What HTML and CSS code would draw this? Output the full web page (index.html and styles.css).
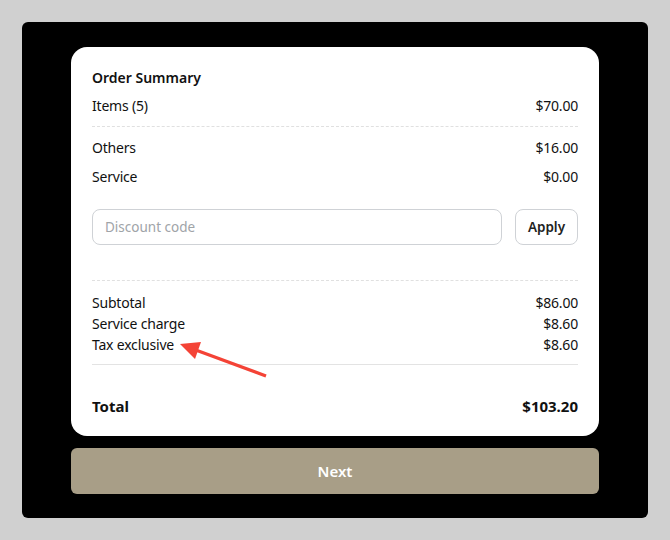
FILE: index.html
```html
<!DOCTYPE html>
<html lang="en">
<head>
    <meta charset="UTF-8">
    <meta name="viewport" content="width=device-width, initial-scale=1.0">
    <title>Order Summary</title>
    <link rel="stylesheet" href="styles.css">
</head>
<body>
    <div class="panel">
        <div class="card">
            <div class="title">Order Summary</div>
            <div class="row"><span>Items (5)</span><span>$70.00</span></div>
            <div class="dash"></div>
            <div class="row"><span>Others</span><span>$16.00</span></div>
            <div class="row"><span>Service</span><span>$0.00</span></div>
            <div class="discount">
                <input type="text" class="code" placeholder="Discount code">
                <button class="apply">Apply</button>
            </div>
            <div class="dash"></div>
            <div class="totals">
                <div class="line"><span>Subtotal</span><span>$86.00</span></div>
                <div class="line"><span>Service charge</span><span>$8.60</span></div>
                <div class="line"><span>Tax exclusive</span><span>$8.60</span></div>
            </div>
            <div class="rule"></div>
            <div class="grand"><span>Total</span><span>$103.20</span></div>
            <svg class="arrow" width="100" height="50" viewBox="0 0 100 50">
                <line x1="95" y1="41" x2="22" y2="14" stroke="#f44336" stroke-width="3.2" stroke-linecap="butt"/>
                <polygon points="9,9 30,7 24,24" fill="#f44336"/>
            </svg>
        </div>
        <button class="next">Next</button>
    </div>
</body>
</html>
```

FILE: styles.css
```css
body {
    margin: 0;
    background: #d0d0d0;
    font-family: "Noto Sans", "Open Sans", sans-serif;
    color: #111;
}

.panel {
    margin: 22px;
    height: 496px;
    box-sizing: border-box;
    background: #000;
    border-radius: 6px;
    padding: 25px 49px 0;
}

.card {
    position: relative;
    background: #fff;
    border-radius: 16px;
    padding: 21px 21px 20px;
    height: 389px;
    box-sizing: border-box;
}

.title {
    font-size: 14px;
    font-weight: 600;
    line-height: 20px;
    margin-bottom: 8px;
}

.row {
    display: flex;
    justify-content: space-between;
    font-size: 14px;
    line-height: 20px;
    margin-bottom: 9px;
    letter-spacing: -0.2px;
}

.dash {
    border-top: 1px dashed #e0e0e0;
    margin: 10px 0 11px;
}

.discount {
    display: flex;
    gap: 13px;
    margin: 22px 0 35px;
}

.code {
    flex: 1;
    height: 36px;
    box-sizing: border-box;
    border: 1px solid #cfd2d6;
    border-radius: 8px;
    padding: 0 12px;
    font-family: inherit;
    font-size: 13.5px;
    outline: none;
}

.code::placeholder {
    color: #a0a4a8;
}

.apply {
    width: 63px;
    height: 36px;
    border: 1px solid #cfd2d6;
    border-radius: 8px;
    background: #fff;
    font-family: inherit;
    font-size: 13.5px;
    font-weight: 600;
    color: #222;
    padding: 0;
}

.totals {
    margin-top: 10px;
}

.line {
    display: flex;
    justify-content: space-between;
    font-size: 14px;
    line-height: 21px;
    letter-spacing: -0.2px;
}

.rule {
    border-top: 1px solid #e3e3e3;
    margin: 9px 0 0;
}

.grand {
    display: flex;
    justify-content: space-between;
    font-size: 15px;
    font-weight: 700;
    margin-top: 31px;
    line-height: 20px;
}

.arrow {
    position: absolute;
    left: 100px;
    top: 288px;
}

.next {
    display: block;
    width: 100%;
    height: 46px;
    margin-top: 12px;
    border: none;
    border-radius: 6px;
    background: #a89e87;
    color: #fff;
    font-family: inherit;
    font-size: 15px;
    font-weight: 600;
}
```
